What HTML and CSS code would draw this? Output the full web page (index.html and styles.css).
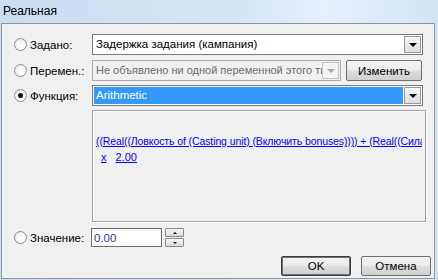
FILE: index.html
```html
<!DOCTYPE html>
<html>
<head>
    <title>Реальная</title>
    <link rel="stylesheet" href="styles.css">
</head>
<body>
    <div class="window">
        <div class="titlebar">Реальная</div>
        <div class="client">
            <div class="row r1">
                <span class="radio"></span><label>Задано:</label>
                <div class="combo">
                    <span class="val">Задержка задания (кампания)</span>
                    <span class="drop"><i></i></span>
                </div>
            </div>
            <div class="row r2">
                <span class="radio"></span><label>Перемен.:</label>
                <div class="combo off">
                    <span class="val">Не объявлено ни одной переменной этого типа</span>
                    <span class="drop"><i></i></span>
                </div>
                <button class="btn edit">Изменить</button>
            </div>
            <div class="row r3">
                <span class="radio on"></span><label>Функция:</label>
                <div class="combo sel">
                    <span class="val">Arithmetic</span>
                    <span class="drop"><i></i></span>
                </div>
            </div>
            <div class="box">
                <div class="expr"><a>((Real((Ловкость of (Casting unit) (Включить bonuses)))) + (Real((Сила of (Casting unit) (Включить bonuses))))</a></div>
                <div class="expr two"><a>x</a><a>2.00</a></div>
            </div>
            <div class="row r4">
                <span class="radio"></span><label>Значение:</label>
                <input class="num" type="text" value="0.00">
                <div class="spin"><span><i class="up"></i></span><span><i></i></span></div>
            </div>
            <div class="footer">
                <button class="btn ok">OK</button>
                <button class="btn">Отмена</button>
            </div>
        </div>
    </div>
</body>
</html>
```

FILE: styles.css
```css
body {
    margin: 0;
    font-family: "Liberation Sans", Arial, sans-serif;
    font-size: 11px;
    color: #000;
}
.window {
    width: 438px;
    height: 280px;
    overflow: hidden;
    background: linear-gradient(90deg, #c9dcf1 0%, #d6e5f5 55%, #e6f0fa 75%, #d3e3f4 100%);
}
.titlebar {
    height: 23px;
    line-height: 23px;
    padding-left: 3px;
    font-size: 12px;
}
.client {
    box-sizing: border-box;
    margin-left: 1px;
    width: 434px;
    height: 256px;
    border: 1px solid #8d97a5;
    background: #f0f0f0;
    padding: 10px 11px 0 12px;
}
.row {
    display: flex;
    align-items: center;
    height: 21px;
}
.r2 { margin-top: 5px; }
.r3 { margin-top: 4px; }
.r4 { margin-top: 6px; height: 19px; }
.radio {
    box-sizing: border-box;
    width: 13px;
    height: 13px;
    border-radius: 50%;
    border: 1px solid #8f8f8f;
    background: radial-gradient(circle at 60% 60%, #fff 0%, #f4f4f4 50%, #d8d8d8 100%);
    margin-right: 3px;
    display: flex;
    align-items: center;
    justify-content: center;
}
.radio.on::after {
    content: "";
    width: 5px;
    height: 5px;
    border-radius: 50%;
    background: #111;
}
label {
    width: 62px;
    font-size: 11.5px;
}
.combo {
    box-sizing: border-box;
    flex: 1;
    min-width: 0;
    height: 21px;
    display: flex;
    border: 1px solid #7a7a7a;
    background: #fff;
    padding: 1px;
}
.combo .val {
    flex: 1;
    min-width: 0;
    line-height: 17px;
    padding-left: 2px;
    white-space: nowrap;
    overflow: hidden;
    font-size: 11.5px;
}
.drop {
    box-sizing: border-box;
    flex: 0 0 17px;
    border: 1px solid #9a9a9a;
    background: linear-gradient(#f6f6f6, #dedede);
    display: flex;
    align-items: center;
    justify-content: center;
}
.drop i {
    width: 0;
    height: 0;
    border-left: 4px solid transparent;
    border-right: 4px solid transparent;
    border-top: 4px solid #000;
}
.combo.off {
    flex: 0 0 249px;
    background: #f0f0f0;
    border-color: #adadad;
    color: #6d6d6d;
}
.combo.off .val { font-size: 11px; }
.combo.off .drop {
    border-color: #c4c4c4;
    background: #f4f4f4;
}
.combo.off .drop i { border-top-color: #a8a8a8; }
.combo.sel .val {
    background: #3399ff;
    color: #fff;
    margin-right: 1px;
}
.btn {
    box-sizing: border-box;
    height: 21px;
    font-family: "Liberation Sans", Arial, sans-serif;
    font-size: 11.5px;
    color: #000;
    border: 1px solid #707070;
    border-radius: 2px;
    background: linear-gradient(#f4f4f4 0%, #ececec 45%, #dcdcdc 55%, #d0d0d0 100%);
    padding: 0;
}
.edit {
    flex: 0 0 76px;
    margin-left: 5px;
}
.box {
    box-sizing: border-box;
    height: 112px;
    margin: 4px -3px 0 78px;
    border: 1px solid #a0a0a0;
    box-shadow: inset 1px 1px #fff, 1px 1px #fff;
    padding: 22px 3px 0 3px;
    overflow: hidden;
}
.expr {
    white-space: nowrap;
    overflow: hidden;
    height: 16px;
    line-height: 16px;
    font-size: 10.5px;
    letter-spacing: -0.1px;
}
.expr a {
    color: #0000ff;
    text-decoration: underline;
}
.two { font-size: 11px; letter-spacing: 0; }
.two a { margin-left: 5px; }
.two a + a { margin-left: 9px; }
.num {
    box-sizing: border-box;
    width: 71px;
    height: 19px;
    border: 1px solid #6f6f6f;
    margin: 0 0 0 -1px;
    padding: 0 2px;
    font-family: "Liberation Sans", Arial, sans-serif;
    font-size: 11.5px;
    color: #1e3d8a;
}
.spin {
    margin-left: 3px;
    display: flex;
    flex-direction: column;
    gap: 1px;
}
.spin span {
    box-sizing: border-box;
    width: 19px;
    height: 9px;
    border: 1px solid #8a8a8a;
    border-radius: 1px;
    background: linear-gradient(#f6f6f6, #dadada);
    display: flex;
    align-items: center;
    justify-content: center;
}
.spin i {
    border-left: 2px solid transparent;
    border-right: 2px solid transparent;
    border-top: 2px solid #000;
}
.spin i.up {
    border-top: 0;
    border-bottom: 2px solid #000;
}
.footer {
    display: flex;
    justify-content: flex-end;
    gap: 10px;
    margin: 9px -8px 0 0;
}
.footer .btn {
    width: 70px;
    height: 20px;
}
.footer .ok {
    border: 1px solid #3c3c3c;
    box-shadow: inset 0 0 0 1px #707070;
}
```
